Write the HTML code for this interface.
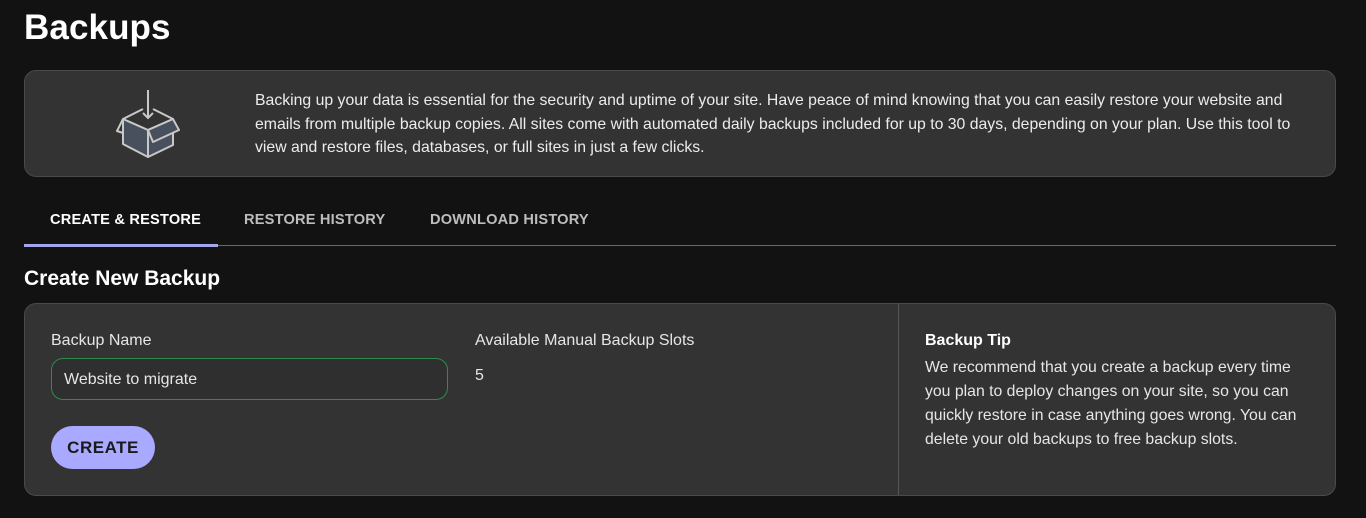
<!DOCTYPE html>
<html><head><style>
*{box-sizing:border-box;margin:0;padding:0}
body{width:1366px;height:518px;background:#121212;color:#e6e6e6;font-family:"Liberation Sans",sans-serif;overflow:hidden;position:relative}
.a{position:absolute}
h1{position:absolute;left:24px;top:8px;font-size:35px;font-weight:bold;color:#fff;letter-spacing:0.1px}
.banner{left:24px;top:70px;width:1312px;height:107px;background:#333;border:1px solid #4a4a4a;border-radius:12px}
.btext{left:255px;top:89px;width:1058px;font-size:15.8px;line-height:23.5px;color:#ececec}
.tab{top:212px;font-size:14.6px;font-weight:bold;color:#bdbdbd;letter-spacing:0.2px}
.card{left:24px;top:303px;width:1312px;height:193px;background:#333;border:1px solid #4a4a4a;border-radius:12px}
</style></head><body>
<h1>Backups</h1>
<div class="a banner"></div>
<svg class="a" style="left:0;top:3px" width="200" height="170">
<g stroke="#c8c8c8" stroke-width="2" fill="#48505e" stroke-linejoin="round">
<path d="M123 116 L148 127 L148 154 L123 141 Z"/>
<path d="M148 127 L173 116 L173 142 L148 154 Z"/>
<path d="M123 116 L117 128 L123 130" fill="none"/>
<path d="M123 116 L143 106 M153 106 L173 116" fill="none"/>
<path d="M148 127 L153 139 L179 127 L173 116 Z"/>
</g>
<path d="M148 87 L148 115 M143 110 L148 115 L153 110" stroke="#c8c8c8" stroke-width="2" fill="none"/>
</svg>
<div class="a btext">Backing up your data is essential for the security and uptime of your site. Have peace of mind knowing that you can easily restore your website and emails from multiple backup copies. All sites come with automated daily backups included for up to 30 days, depending on your plan. Use this tool to view and restore files, databases, or full sites in just a few clicks.</div>
<div class="a tab" style="left:50px;color:#fff">CREATE &amp; RESTORE</div>
<div class="a tab" style="left:244px">RESTORE HISTORY</div>
<div class="a tab" style="left:430px">DOWNLOAD HISTORY</div>
<div class="a" style="left:24px;top:245px;width:1312px;height:1px;background:#6a6a6a"></div>
<div class="a" style="left:24px;top:244px;width:194px;height:3px;background:#a5a5ec"></div>
<div class="a" style="left:24px;top:267px;font-size:21px;font-weight:bold;color:#fff">Create New Backup</div>
<div class="a card"></div>
<div class="a" style="left:898px;top:304px;width:1px;height:191px;background:#555"></div>
<div class="a" style="left:51px;top:332px;font-size:16px">Backup Name</div>
<div class="a" style="left:51px;top:358px;width:397px;height:42px;border:1px solid #2e8b4e;border-radius:12px;background:#2f2f2f"></div>
<div class="a" style="left:64px;top:371px;font-size:16px">Website to migrate</div>
<div class="a" style="left:51px;top:426px;width:104px;height:43px;background:#a9a9ff;border-radius:22px;color:#1a1a1a;font-weight:bold;font-size:17px;text-align:center;line-height:43px;letter-spacing:0.5px">CREATE</div>
<div class="a" style="left:475px;top:332px;font-size:16px">Available Manual Backup Slots</div>
<div class="a" style="left:475px;top:367px;font-size:16px">5</div>
<div class="a" style="left:925px;top:332px;font-size:16px;font-weight:bold;color:#fff">Backup Tip</div>
<div class="a" style="left:925px;top:356px;width:385px;font-size:15.8px;line-height:24px">We recommend that you create a backup every time you plan to deploy changes on your site, so you can quickly restore in case anything goes wrong. You can delete your old backups to free backup slots.</div>
</body></html>
